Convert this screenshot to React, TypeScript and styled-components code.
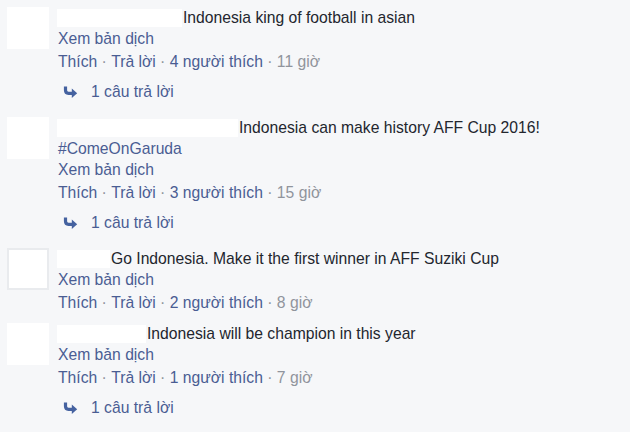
import styled, { createGlobalStyle } from "styled-components";

const GlobalStyle = createGlobalStyle`
  html, body {
    margin: 0;
    padding: 0;
    background: #f6f7f9;
  }
  body {
    font-family: "Liberation Sans", Arial, sans-serif;
    font-size: 15.7px;
    color: #1d2129;
  }
`;

type Reply = { count: number };

type Comment = {
  nameWidth: number;
  text: string;
  extra?: string;
  likes: number;
  time: string;
  reply?: Reply;
  bordered?: boolean;
};

const comments: Comment[] = [
  {
    nameWidth: 125,
    text: "Indonesia king of football in asian",
    likes: 4,
    time: "11 giờ",
    reply: { count: 1 },
  },
  {
    nameWidth: 181,
    text: "Indonesia can make history AFF Cup 2016!",
    extra: "#ComeOnGaruda",
    likes: 3,
    time: "15 giờ",
    reply: { count: 1 },
  },
  {
    nameWidth: 53,
    text: "Go Indonesia. Make it the first winner in AFF Suziki Cup",
    likes: 2,
    time: "8 giờ",
    bordered: true,
  },
  {
    nameWidth: 89,
    text: "Indonesia will be champion in this year",
    likes: 1,
    time: "7 giờ",
    reply: { count: 1 },
  },
];

// bold "reply" hook arrow
const ReplyArrow = () => (
  <svg width="15" height="12" viewBox="0 0 15 12">
    <path
      d="M2.5 0.5 V4.3 Q2.5 7.3 5.5 7.3 H9.5"
      fill="none"
      stroke="#4562a0"
      strokeWidth="3.2"
    />
    <polygon points="8.8,2.6 14.2,7.3 8.8,12" fill="#4562a0" />
  </svg>
);

const App = () => (
  <>
    <GlobalStyle />
    <List>
      {comments.map((c, i) => (
        <Row key={i}>
          <Avatar $bordered={c.bordered} />
          <Body>
            <Line>
              <NameBlock style={{ width: c.nameWidth }} />
              <Text>{c.text}</Text>
            </Line>
            {c.extra && (
              <Line>
                <Link>{c.extra}</Link>
              </Line>
            )}
            <Line>
              <Link>Xem bản dịch</Link>
            </Line>
            <Actions>
              <Link>Thích</Link>
              <Dot> · </Dot>
              <Link>Trả lời</Link>
              <Dot> · </Dot>
              <Link>{c.likes} người thích</Link>
              <Dot> · </Dot>
              <Time>{c.time}</Time>
            </Actions>
            {c.reply && (
              <ReplyRow>
                <ReplyArrow />
                <Link>{c.reply.count} câu trả lời</Link>
              </ReplyRow>
            )}
          </Body>
        </Row>
      ))}
    </List>
  </>
);

const List = styled.div`
  display: flex;
  flex-direction: column;
  gap: 10px;
  padding: 7px 0 0 7px;
  width: 623px;
  height: 425px;
  overflow: hidden;
`;

const Row = styled.div`
  display: flex;
  align-items: flex-start;
  gap: 8px;
`;

const Avatar = styled.div<{ $bordered?: boolean }>`
  width: 42px;
  height: 42px;
  flex: none;
  box-sizing: border-box;
  background: #fff;
  border: ${({ $bordered }) => ($bordered ? "2px solid #e9ebee" : "none")};
`;

const Body = styled.div`
  display: flex;
  flex-direction: column;
  padding-left: 1px;
`;

const Line = styled.div`
  display: flex;
  align-items: center;
  height: 21px;
  line-height: 21px;
  white-space: nowrap;
`;

const NameBlock = styled.span`
  display: inline-block;
  height: 18px;
  margin-left: -1px;
  margin-right: 1px;
  background: #fff;
`;

const Text = styled.span`
  color: #23262e;
`;

const Link = styled.span`
  color: #4a5d93;
`;

const Actions = styled(Line)`
  margin-top: 2px;
`;

const Dot = styled.span`
  color: #90949c;
  white-space: pre;
`;

const Time = styled.span`
  color: #90949c;
`;

const ReplyRow = styled(Line)`
  margin-top: 9px;
  margin-bottom: 5px;
  padding-left: 5px;
  gap: 13px;

  svg {
    flex: none;
  }
`;

export default App;
